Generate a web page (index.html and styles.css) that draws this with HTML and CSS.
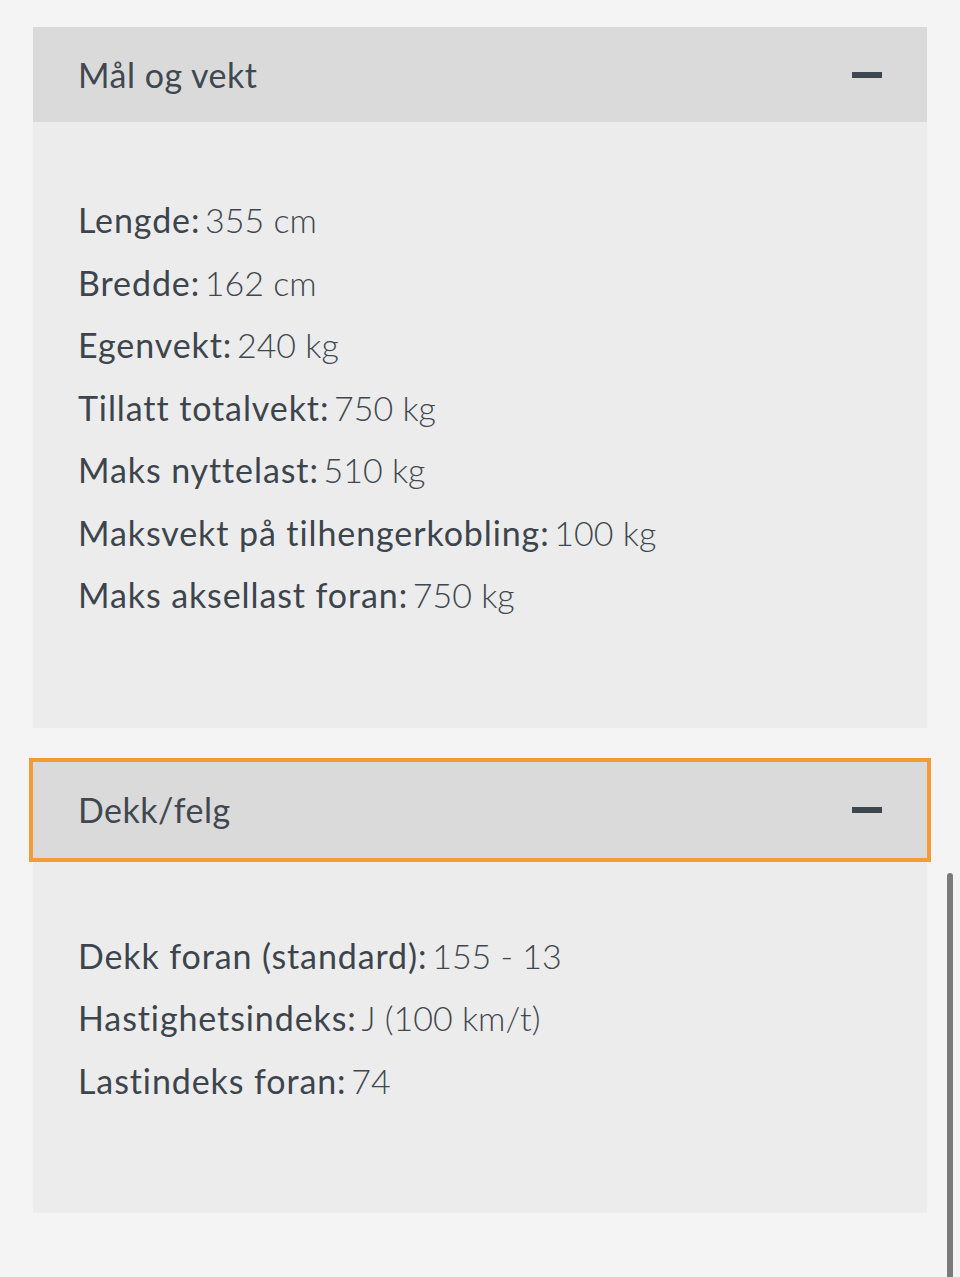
FILE: index.html
```html
<!DOCTYPE html>
<html lang="no">
<head>
<meta charset="utf-8">
<title>Spesifikasjoner</title>
<link rel="stylesheet" href="styles.css">
</head>
<body>
<main class="specs">
  <section class="panel">
    <div class="panel-head">
      <h2 class="panel-title">Mål og vekt</h2>
      <span class="minus"></span>
    </div>
    <div class="panel-body">
      <p class="row"><span class="label">Lengde:</span> <span class="value">355 cm</span></p>
      <p class="row"><span class="label">Bredde:</span> <span class="value">162 cm</span></p>
      <p class="row"><span class="label">Egenvekt:</span> <span class="value">240 kg</span></p>
      <p class="row"><span class="label">Tillatt totalvekt:</span> <span class="value">750 kg</span></p>
      <p class="row"><span class="label">Maks nyttelast:</span> <span class="value">510 kg</span></p>
      <p class="row"><span class="label">Maksvekt på tilhengerkobling:</span> <span class="value">100 kg</span></p>
      <p class="row"><span class="label">Maks aksellast foran:</span> <span class="value">750 kg</span></p>
    </div>
  </section>
  <section class="panel">
    <div class="panel-head focused">
      <h2 class="panel-title">Dekk/felg</h2>
      <span class="minus"></span>
    </div>
    <div class="panel-body">
      <p class="row"><span class="label">Dekk foran (standard):</span> <span class="value">155 - 13</span></p>
      <p class="row"><span class="label">Hastighetsindeks:</span> <span class="value">J (100 km/t)</span></p>
      <p class="row"><span class="label">Lastindeks foran:</span> <span class="value">74</span></p>
    </div>
  </section>
</main>
<div class="scrollbar"></div>
</body>
</html>
```

FILE: styles.css
```css
html, body {
  margin: 0;
  padding: 0;
  background: #f4f4f4;
}
body {
  font-family: Lato, "Open Sans", sans-serif;
  font-variant-ligatures: none;
  color: #3f4850;
  height: 1277px;
  overflow: hidden;
}
.specs {
  padding: 27px 33px 0 33px;
  display: flex;
  flex-direction: column;
  gap: 34px;
}
.panel {
  display: flex;
  flex-direction: column;
}
.panel-head {
  height: 95px;
  background: #dadada;
  display: flex;
  align-items: center;
  justify-content: space-between;
  padding: 0 45px 0 45px;
}
.panel-head.focused {
  height: 96px;
  position: relative;
  z-index: 1;
  outline: 4px solid #f29b37;
  outline-offset: 0;
}
.panel-title {
  margin: 0;
  font-size: 34px;
  font-weight: 400;
  letter-spacing: 0.5px;
}
.minus {
  width: 30px;
  height: 6px;
  background: #3e4750;
}
.panel-body {
  background: #ececec;
  padding: 67px 45px 101px 45px;
}
.row {
  margin: 0;
  font-size: 34px;
  line-height: 62.5px;
  white-space: nowrap;
  word-spacing: -4px;
}
.label {
  font-weight: 400;
  letter-spacing: 0.9px;
  word-spacing: normal;
  color: #3c454d;
}
.value {
  font-weight: 300;
  word-spacing: normal;
}
.scrollbar {
  position: fixed;
  right: 7px;
  top: 873px;
  bottom: -10px;
  width: 6px;
  border-radius: 3px;
  background: #7a7a7a;
}
```
